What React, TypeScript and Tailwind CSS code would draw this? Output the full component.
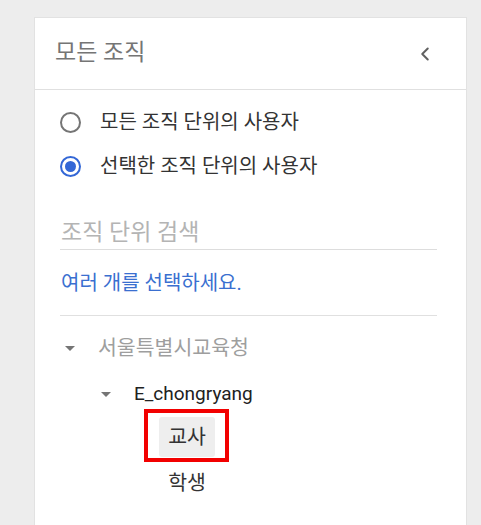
import { ChevronLeft } from 'lucide-react';

const font = "font-['Roboto','Noto_Sans_CJK_KR',sans-serif]";

function Radio({ checked, label }: { checked?: boolean; label: string }) {
  return (
    <div className="flex h-[44px] items-center">
      <span
        className={`flex h-[21px] w-[21px] items-center justify-center rounded-full border-[2.5px] ${
          checked ? 'border-[#3367d6]' : 'border-[#757575]'
        }`}
      >
        {checked && <span className="h-[11px] w-[11px] rounded-full bg-[#3367d6]" />}
      </span>
      <span className="ml-[19px] text-[20px] text-[#333333]">{label}</span>
    </div>
  );
}

function Caret() {
  return (
    <svg width="10" height="5" viewBox="0 0 10 5" className="shrink-0">
      <path d="M0 0h10L5 5z" fill="#757575" />
    </svg>
  );
}

export default function App() {
  return (
    <div className={`min-h-[525px] bg-[#ededed] pl-[34px] pt-[17px] ${font}`}>
      <div className="h-[508px] w-[433px] border border-b-0 border-[#e2e2e2] bg-white">
        <div className="flex h-[72px] items-center justify-between border-b border-[#e0e0e0] pl-[20px] pr-[30px]">
          <span className="text-[23px] text-[#757575]">모든 조직</span>
          <ChevronLeft size={22} strokeWidth={2.2} className="text-[#616161]" />
        </div>

        <div className="pl-[25px] pr-[29px] pt-[10px]">
          <Radio label="모든 조직 단위의 사용자" />
          <Radio checked label="선택한 조직 단위의 사용자" />

          <div className="mt-[30px] border-b border-[#dddddd] pb-[1px] pl-[1px]">
            <span className="text-[23px] leading-[30px] text-[#b4b4b4]">조직 단위 검색</span>
          </div>

          <div className="flex h-[66px] items-center border-b border-[#e0e0e0] pl-[1px]">
            <span className="text-[20px] text-[#3a6fd0]">여러 개를 선택하세요.</span>
          </div>

          <div className="pt-[18px]">
            <div className="flex h-[28px] items-center">
              <span className="ml-[5px]">
                <Caret />
              </span>
              <span className="ml-[23px] text-[20.5px] text-[#9e9e9e]">서울특별시교육청</span>
            </div>
            <div className="mt-[18px] flex h-[28px] items-center">
              <span className="ml-[41px]">
                <Caret />
              </span>
              <span className="ml-[23px] text-[19px] text-[#212121]">E_chongryang</span>
            </div>
            <div className="mt-[9px] pl-[99px]">
              <div className="relative w-fit">
                <div className="flex h-[40px] w-[56px] items-center justify-center rounded-[3px] bg-[#eeeeee] text-[20.5px] text-[#333333]">
                  교사
                </div>
                <div className="pointer-events-none absolute -bottom-[5px] -left-[15px] -right-[14px] -top-[8px] border-[4px] border-[#f20000]" />
              </div>
              <div className="mt-[11px] flex w-[56px] justify-center text-[20.5px] text-[#333333]">학생</div>
            </div>
          </div>
        </div>
      </div>
    </div>
  );
}
